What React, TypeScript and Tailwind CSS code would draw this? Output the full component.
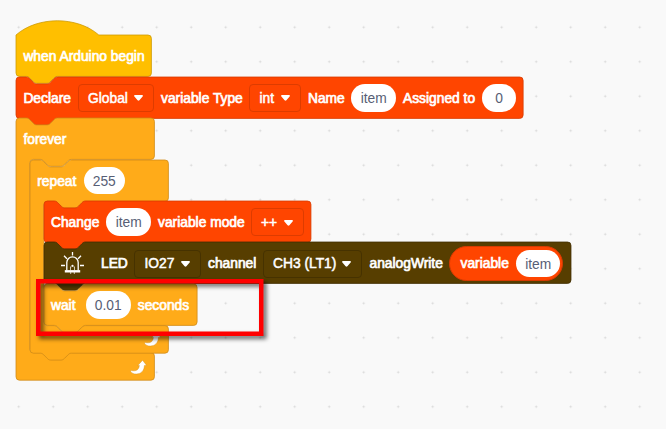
import type { ReactNode } from "react";

type Tone = "events" | "data" | "control" | "board";

const FILL: Record<Tone, string> = { events: "#ffbf00", data: "#ff4500", control: "#ffab19", board: "#573e00" };
const STROKE: Record<Tone, string> = { events: "#cc9900", data: "#d63a00", control: "#cf8b17", board: "#3f2c00" };

// One workspace unit in pixels.
const UNIT = 0.8625;

const NOTCH = "c2 0 3 1 4 2l4 4c1 1 2 2 4 2h12c2 0 3 -1 4 -2l4 -4c1 -1 2 -2 4 -2";
const TAB = "c-2 0 -3 1 -4 2l-4 4c-1 1 -2 2 -4 2h-12c-2 0 -3 -1 -4 -2l-4 -4c-1 -1 -2 -2 -4 -2";

const hatPath = (w: number) =>
  `M0 0c25 -22 71 -22 96 0H${w - 4}a4 4 0 0 1 4 4V44a4 4 0 0 1 -4 4H48${TAB}H4a4 4 0 0 1 -4 -4Z`;

const stackPath = (w: number) =>
  `M0 4a4 4 0 0 1 4 -4H12${NOTCH}H${w - 4}a4 4 0 0 1 4 4V44a4 4 0 0 1 -4 4H48${TAB}H4a4 4 0 0 1 -4 -4Z`;

const loopPath = (w: number, body: number, tab: boolean) =>
  `M0 4a4 4 0 0 1 4 -4H12${NOTCH}H${w - 4}a4 4 0 0 1 4 4V44a4 4 0 0 1 -4 4H64${TAB}H20a4 4 0 0 0 -4 4V${44 + body}a4 4 0 0 0 4 4H28${NOTCH}H${w - 4}a4 4 0 0 1 4 4V${76 + body}a4 4 0 0 1 -4 4${tab ? `H48${TAB}` : ""}H4a4 4 0 0 1 -4 -4Z`;

function Shape({ d, tone }: { d: string; tone: Tone }) {
  return (
    <svg className="absolute left-0 top-0 h-px w-px overflow-visible" aria-hidden="true">
      <path d={d} transform={`scale(${UNIT})`} fill={FILL[tone]} stroke={STROKE[tone]} strokeWidth="0.9" />
    </svg>
  );
}

function Row({ children }: { children: ReactNode }) {
  return <div className="relative flex h-[41.4px] items-center whitespace-nowrap pl-[7px] pt-px">{children}</div>;
}

function Block({ tone, d, children }: { tone: Tone; d: string; children: ReactNode }) {
  return (
    <div className="relative">
      <Shape d={d} tone={tone} />
      <Row>{children}</Row>
    </div>
  );
}

function LoopArrow() {
  return (
    <svg className="block h-[16px] w-[17px] overflow-visible" viewBox="0 0 17 16" aria-hidden="true">
      <path
        d="M12.6 1.2 16.6 6.500h-2.200c-.100 5-3.300 8.500-8.100 8.500-2.300 0-4.600-.900-5.500-2.300-.4-.800.100-1.300.900-1.100 4.500.900 7.300-.900 7.700-5.100H7.800Z"
        fill="#fff"
        stroke="#cf8b17"
        strokeWidth="0.4"
        strokeLinejoin="round"
      />
    </svg>
  );
}

function Loop({ d, arrow, header, children }: { d: string; arrow: string; header: ReactNode; children: ReactNode }) {
  return (
    <div className="relative">
      <Shape d={d} tone="control" />
      <Row>{header}</Row>
      <div className="pl-[13.8px]">{children}</div>
      <div className={`relative flex h-[27.6px] items-center ${arrow}`}>
        <LoopArrow />
      </div>
    </div>
  );
}

function Label({ w, children }: { w: string; children: ReactNode }) {
  return <span className={`${w} shrink-0 pt-[1.6px] [-webkit-text-stroke:0.7px_white]`}>{children}</span>;
}

function Menu({ w, tone, children }: { w: string; tone: string; children: ReactNode }) {
  return (
    <span className={`${w} ${tone} mr-[7px] flex h-[28px] shrink-0 items-center justify-between rounded-[4px] border pl-[9px] pr-[10px]`}>
      <span className="pt-[1.6px] [-webkit-text-stroke:0.5px_white]">{children}</span>
      <svg className="mt-px h-[6px] w-[9px]" viewBox="0 0 9 6" aria-hidden="true">
        <path d="M1 0h7c1 0 1.2.9.6 1.5L5.4 5.3c-.5.6-1.3.6-1.8 0L.4 1.5C-.2.9 0 0 1 0Z" fill="#fff" />
      </svg>
    </span>
  );
}

function Value({ w, children }: { w: string; children: ReactNode }) {
  return (
    <span className={`${w} flex h-[27.4px] shrink-0 items-center justify-center rounded-full bg-white pt-[2px] text-[#575e75]`}>
      {children}
    </span>
  );
}

function LedIcon() {
  return (
    <svg className="ml-[10px] mr-[17px] h-[23px] w-[23px] shrink-0" viewBox="0 0 23 23" fill="none" stroke="#fff" strokeWidth="1.3" aria-hidden="true">
      <path d="M5.800 18.500V10.600a5.700 5.700 0 0 1 11.400 0v7.900M11.500 0v3.600M3 3.800l2.900 2.900M20 3.800l-2.900 2.900M0 13.500h4M19 13.500h4" />
      <path d="M9.500 18.200v-3.400h1M13.500 18.200v-3.400h-1M9.700 20v2M13.300 20v2" strokeWidth="0.7" />
      <path d="M3.800 19.300h15.400" strokeWidth="2.4" />
      <circle cx="11.500" cy="13.800" r="1.1" fill="#fff" stroke="none" />
    </svg>
  );
}

const DATA_MENU = "border-[#dd3c00]";
const BOARD_MENU = "border-[#463200]";

export default function App() {
  return (
    <main className="relative h-[429px] w-[666px] overflow-hidden bg-[#f9f9f9] font-['Liberation_Sans',Arial,sans-serif] text-[13.8px] leading-[18px] text-white">
      <svg className="absolute inset-0 h-full w-full" aria-hidden="true">
        <defs>
          <pattern id="grid" x="1.5" y="10" width="34.5" height="34.5" patternUnits="userSpaceOnUse">
            <path d="M16.2 17.3h2M17.2 16.3v2" stroke="#d6d6d6" strokeWidth="1" />
          </pattern>
        </defs>
        <rect width="100%" height="100%" fill="url(#grid)" />
      </svg>

      <div className="relative pl-[16.4px] pt-[35.4px]">
        <Block tone="events" d={hatPath(157)}>
          <Label w="w-[121px]">when Arduino begin</Label>
        </Block>

        <Block tone="data" d={stackPath(588)}>
          <Label w="w-[54.6px]">Declare</Label>
          <Menu w="w-[76px]" tone={DATA_MENU}>Global</Menu>
          <Label w="w-[88.5px]">variable Type</Label>
          <Menu w="w-[51.5px]" tone={DATA_MENU}>int</Menu>
          <Label w="w-[43.5px]">Name</Label>
          <Value w="w-[44.5px] mr-[7px]">item</Value>
          <Label w="w-[79px]">Assigned to</Label>
          <Value w="w-[34px]">0</Value>
        </Block>

        <Loop d={loopPath(160.5, 224, false)} arrow="pl-[114px]" header={<Label w="w-[44px]">forever</Label>}>
          <Loop
            d={loopPath(160.5, 144, true)}
            arrow="pl-[114px]"
            header={
              <>
                <Label w="w-[46.6px]">repeat</Label>
                <Value w="w-[41px]">255</Value>
              </>
            }
          >
            <Block tone="data" d={stackPath(309.5)}>
              <Label w="w-[55.5px]">Change</Label>
              <Value w="w-[44.5px] mr-[7px]">item</Value>
              <Label w="w-[93px]">variable mode</Label>
              <Menu w="w-[53px]" tone={DATA_MENU}>++</Menu>
            </Block>

            <Block tone="board" d={stackPath(611)}>
              <LedIcon />
              <Label w="w-[33.5px]">LED</Label>
              <Menu w="w-[66.5px]" tone={BOARD_MENU}>IO27</Menu>
              <Label w="w-[55px]">channel</Label>
              <Menu w="w-[99.5px]" tone={BOARD_MENU}>CH3 (LT1)</Menu>
              <Label w="w-[80px]">analogWrite</Label>
              <span className="flex h-[34.5px] w-[114px] shrink-0 items-center rounded-full border border-[#d63a00] bg-[#ff4500] pl-[10px]">
                <Label w="w-[55.5px]">variable</Label>
                <Value w="w-[44.5px]">item</Value>
              </span>
            </Block>

            <Block tone="control" d={stackPath(177.5)}>
              <Label w="w-[34.8px]">wait</Label>
              <Value w="w-[45px] mr-[7px]">0.01</Value>
              <Label w="w-[53px]">seconds</Label>
            </Block>
          </Loop>
        </Loop>
      </div>

      <div className="absolute left-[35.5px] top-[279.3px] h-[57px] w-[228px] drop-shadow-[3px_3px_2px_rgba(0,0,0,0.6)]">
        <svg className="block h-full w-full" aria-hidden="true">
          <rect x="2.25" y="2.25" width="223" height="52.5" fill="none" stroke="#ff0000" strokeWidth="4.5" />
        </svg>
      </div>
    </main>
  );
}
